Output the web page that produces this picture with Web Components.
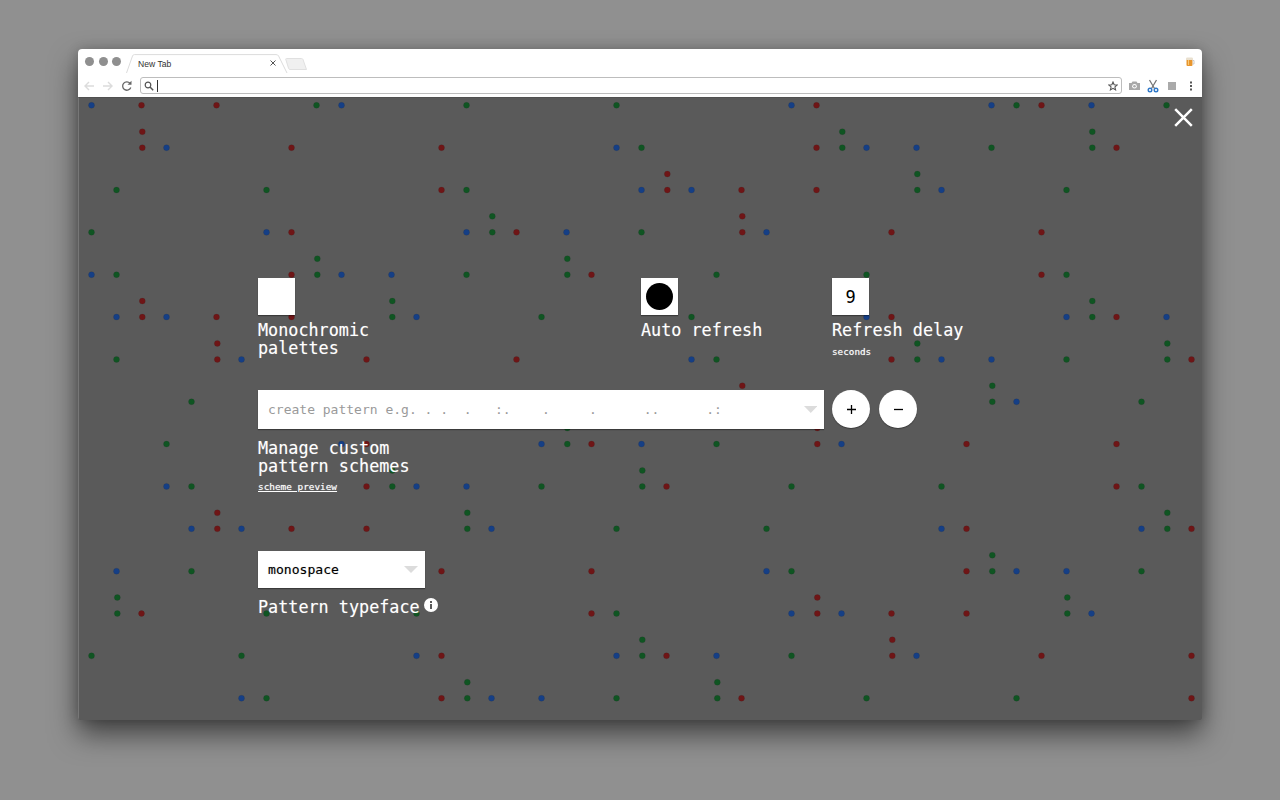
<!DOCTYPE html>
<html lang="en">
<head>
<meta charset="utf-8">
<title>New Tab</title>
<style>
  html, body { margin: 0; height: 100%; }
  body { background: #909090; font-family: "DejaVu Sans Mono", monospace; overflow: hidden; }
</style>
</head>
<body>
<browser-window>
  <settings-overlay>
    <dot-field slot="backdrop"></dot-field>
    <div slot="row1" style="display:contents">
      <setting-box style="width:383px" label="Monochromic&#10;palettes"></setting-box>
      <setting-box style="width:191px" label="Auto refresh" kind="circle"></setting-box>
      <setting-box label="Refresh delay" kind="number" value="9" note="seconds"></setting-box>
    </div>
    <pattern-row slot="row2"></pattern-row>
    <typeface-row slot="row3"></typeface-row>
  </settings-overlay>
</browser-window>

<script>
function mk(tag, css, html) {
  customElements.define(tag, class extends HTMLElement {
    constructor() {
      super();
      this.attachShadow({ mode: "open" }).innerHTML = "<style>" + css + "</style>" + html;
    }
  });
}

mk("browser-window",
  `:host{display:flex;flex-direction:column;width:1124px;height:671px;margin:49px 0 0 78px;
     border-radius:4px 4px 3px 3px;box-shadow:0 14px 28px rgba(0,0,0,.55),0 0 12px rgba(0,0,0,.18);overflow:hidden;background:#5a5a5a}
   main{flex:1;display:flex;min-height:0}`,
  `<tab-strip></tab-strip><tool-bar></tool-bar><main><slot></slot></main>`);

mk("tab-strip",
  `:host{display:flex;align-items:flex-end;height:25px;background:#fff;position:relative;flex:none}
   .lights{display:flex;gap:4.5px;padding:0 0 8px 7px;width:40px}
   .lights i{width:9px;height:9px;border-radius:50%;background:#8f8f8f;display:block}
   .tab{position:relative;width:164px;height:19px;margin:0 0 1px 1px;display:flex;align-items:center;
     font:8.6px "Liberation Sans",sans-serif;color:#333;padding-left:12px;box-sizing:border-box}
   .tab svg.shape{position:absolute;left:0;top:0}
   .tab span{position:relative}
   .tab b{position:absolute;left:143px;top:5px;width:8px;height:8px}
   .new{margin:0 0 0 -6px;padding-bottom:3px}
   .fav{position:absolute;right:7px;top:7px}`,
  `<div class="lights"><i></i><i></i><i></i></div>
   <div class="tab">
     <svg class="shape" width="164" height="19" viewBox="0 0 164 19"><path d="M.5 19 6.500 2Q7 .6 8.500 .6H150Q152 .6 152.600 2L161 19" fill="#fff" stroke="#dcdcdc"/></svg>
     <span>New Tab</span>
     <b><svg width="8" height="8" viewBox="0 0 8 8"><path d="M1.500 1.500 6.500 6.500M6.500 1.500 1.500 6.500" stroke="#555" stroke-width="1"/></svg></b>
   </div>
   <svg class="new" width="24" height="14" viewBox="0 0 24 14"><path d="M2.500 1.500H17.500Q18.500 1.500 19 2.500L22.500 12.500H6Q5 12.500 4.600 11.500L1.800 2.500Q1.500 1.500 2.500 1.500Z" fill="#f0f0f0" stroke="#e0e0e0"/></svg>
   <svg class="fav" width="10" height="11" viewBox="0 0 10 11"><rect x="1.500" y="3" width="6" height="7" rx="1" fill="#e8962e"/><rect x="3" y="4" width="1" height="5" fill="#f7c977"/><path d="M7.500 4.500H9V8H7.500" fill="none" stroke="#c9c9c9"/><rect x="1" y="1.500" width="7" height="2.500" rx="1.200" fill="#e9e0cf"/></svg>`);

mk("tool-bar",
  `:host{display:flex;align-items:center;height:23px;background:#fff;flex:none;box-sizing:border-box}
   svg{display:block;flex:none}
   .nav{display:flex;align-items:center;gap:3px;padding-left:3px;width:62px;box-sizing:border-box}
   .omni{width:982px;height:17px;box-sizing:border-box;border:1.5px solid #bdbdbd;border-radius:3px;display:flex;align-items:center;padding:0 3px 0 3px}
   .cursor{width:1px;height:12px;background:#333;margin-left:3px}
   .grow{flex:1}
   .acts{display:flex;align-items:center;gap:5px;padding-left:6px}`,
  `<div class="nav">
     <svg width="16" height="14" viewBox="0 0 16 14"><path d="M13 7H4M8 3 4 7l4 4" fill="none" stroke="#dcdcdc" stroke-width="1.400"/></svg>
     <svg width="16" height="14" viewBox="0 0 16 14"><path d="M3 7H12M8 3l4 4-4 4" fill="none" stroke="#dcdcdc" stroke-width="1.400"/></svg>
     <svg width="16" height="14" viewBox="0 0 16 14"><path d="M11.800 8.500A4.200 4.200 0 1 1 11 4.200" fill="none" stroke="#666" stroke-width="1.300"/><path d="M12.500 1.800V5.800H8.500Z" fill="#666"/></svg>
   </div>
   <div class="omni">
     <svg width="10" height="10" viewBox="0 0 10 10"><circle cx="4" cy="4" r="2.800" fill="none" stroke="#555" stroke-width="1.200"/><path d="M6 6 9.200 9.200" stroke="#555" stroke-width="1.500"/></svg>
     <span class="cursor"></span><span class="grow"></span>
     <svg width="10" height="10" viewBox="0 0 12 12"><path d="M6 1.200 7.400 4.500 11 4.800 8.300 7.100 9.100 10.700 6 8.800 2.900 10.700 3.700 7.100 1 4.800 4.600 4.500Z" fill="none" stroke="#555" stroke-width="1.300"/></svg>
   </div>
   <div class="acts">
     <svg width="13" height="13" viewBox="0 0 13 13"><path d="M1 4H3.500L4.500 2.500H8.500L9.500 4H12V11H1Z" fill="#a8a8a8"/><circle cx="6.500" cy="7.300" r="2.300" fill="#fff"/><circle cx="6.500" cy="7.300" r="1.300" fill="#a8a8a8"/></svg>
     <svg width="14" height="14" viewBox="0 0 14 14"><path d="M3.500 1 8.500 9.500M10.500 1 5.500 9.500" stroke="#777" stroke-width="1.300" fill="none"/><circle cx="4" cy="11" r="1.800" fill="none" stroke="#2f78c8" stroke-width="1.400"/><circle cx="10" cy="11" r="1.800" fill="none" stroke="#2f78c8" stroke-width="1.400"/></svg>
     <svg width="14" height="14" viewBox="0 0 14 14"><rect x="3" y="3" width="8" height="8" fill="#aaa"/></svg>
     <svg width="14" height="14" viewBox="0 0 14 14"><g fill="#555"><rect x="6" y="2.500" width="2" height="2"/><rect x="6" y="6" width="2" height="2"/><rect x="6" y="9.500" width="2" height="2"/></g></svg>
   </div>`);

mk("settings-overlay",
  `:host{display:block;flex:1;position:relative;background:#5a5a5a;border-top:1px solid #505050;box-sizing:border-box;
     border-left:1px solid #777}
   .panel{position:relative;display:flex;flex-direction:column;padding:180px 0 0 179px;color:#fff}
   .row1{display:flex;height:112px}
   .row2{height:161px}
   .close{position:absolute;right:9px;top:10px;width:19px;height:19px}
   svg{display:block}`,
  `<slot name="backdrop"></slot>
   <div class="panel">
     <div class="row1"><slot name="row1"></slot></div>
     <div class="row2"><slot name="row2"></slot></div>
     <div class="row3"><slot name="row3"></slot></div>
   </div>
   <div class="close"><svg width="19" height="19" viewBox="0 0 19 19"><path d="M1.200 1.200 17.800 17.800M17.800 1.200 1.200 17.800" stroke="#fff" stroke-width="2.500"/></svg></div>`);

customElements.define("dot-field", class extends HTMLElement {
  constructor() {
    super();
    const s = this.attachShadow({ mode: "open" });
    const C = { r: "#6f1516", g: "#0f5522", b: "#153f86" };
    // each row: [upper-dot columns, base-dot columns]; a column with an upper dot is nudged right (":" glyph)
    const R = [
      ["", "0b 2r 5r 9g 10b 15g 21g 28b 29r 36b 37g 38r 40b 43g"],
      ["2r 30g 40g", "2r 3b 8r 14r 21b 22g 29r 30g 31b 33b 36g 40g 41r"],
      ["23r 33g", "1g 7g 14r 15g 22b 23r 24b 26r 29r 33g 34b 39g"],
      ["16g 26r", "0g 7b 8r 15b 16g 17r 19b 22g 26r 27b 32r 38r"],
      ["9g 19g", "0b 1g 8r 9g 10b 12b 15g 19g 20r 25g 31g 38r 39g"],
      ["2r 12g 40g", "1b 2r 3b 5r 8r 12g 13b 18g 24g 31b 32r 39b 40g 41r 43b"],
      ["5r 33g 43g", "1g 5r 6b 11r 17r 24b 25g 32r 33g 34b 36b 39g 43g 44r"],
      ["26r 36g", "4g 36g 37b 42g"],
      ["19g 29r", "3g 10b 11r 18b 19g 20r 22b 25g 29r 30b 35r 41r"],
      ["12g 22g", "3b 4g 11r 12g 13b 15b 18g 22g 23r 28g 34g 41r 42g"],
      ["5r 15g 43g", "4b 5r 6b 8r 11r 15g 16b 21g 27g 34b 35r 42b 43g 44r"],
      ["36g", "1b 4g 14r 20r 27b 28g 35r 36g 37b 39b 42g"],
      ["1g 29r 39g", "1g 2r 7g 13g 20r 21g 28b 29r 30b 32r 35r 39g 40b"],
      ["22g 32r", "0g 6g 13b 14r 21b 22g 23r 25b 28g 32r 33b 38r 44r"],
      ["15g 25g", "6b 7g 14r 15g 16b 18b 21g 25g 26r 31g 37g 44r"],
    ];
    let c = "";
    R.forEach((row, i) => {
      const by = 7.3 + i * 42.35;
      const upper = row[0].split(" ").filter(Boolean);
      const nudged = new Set(upper.map(t => parseInt(t)));
      const put = (t, y) => {
        const k = parseInt(t), col = C[t.slice(-1)];
        const x = 12.5 + k * 25 + (nudged.has(k) ? .8 : 0);
        c += `<circle cx="${x}" cy="${y}" r="3" fill="${col}" stroke="rgba(40,40,40,.25)" stroke-width=".6"/>`;
      };
      upper.forEach(t => put(t, by - 16));
      row[1].split(" ").forEach(t => put(t, by));
    });
    s.innerHTML = `<style>:host{position:absolute;inset:0;display:block}svg{display:block;position:absolute;inset:0}</style>
      <svg width="1124" height="623" viewBox="0 0 1124 623">${c}</svg>`;
  }
});

customElements.define("setting-box", class extends HTMLElement {
  constructor() {
    super();
    const kind = this.getAttribute("kind");
    const label = this.getAttribute("label") || "";
    const note = this.getAttribute("note");
    const value = this.getAttribute("value") || "";
    const inner = kind === "circle" ? `<i></i>` : (kind === "number" ? `<span>${value}</span>` : "");
    this.attachShadow({ mode: "open" }).innerHTML = `<style>
      :host{display:block;flex:none;position:relative;font-family:"DejaVu Sans Mono",monospace}
      .box{width:37px;height:37px;background:#fff;box-shadow:0 1px 1px rgba(0,0,0,.35);display:flex;align-items:center;justify-content:center;color:#000;font-size:17px}
      .box i{display:block;width:27px;height:27px;border-radius:50%;background:#000}
      .lbl{margin:6px 0 0;font-size:16.8px;line-height:18px;white-space:pre;color:#fff;text-shadow:0 0 1px rgba(255,255,255,.35)}
      .note{margin-top:7px;font-size:9.300px;line-height:11px;color:#fff;text-shadow:0 0 1px rgba(255,255,255,.6)}
    </style><div class="box">${inner}</div><div class="lbl">${label}</div>${note ? `<div class="note">${note}</div>` : ""}`;
  }
});

mk("pattern-row",
  `:host{display:block;font-family:"DejaVu Sans Mono",monospace;color:#fff}
   .top{display:flex;align-items:center;gap:8px}
   .input{width:566px;height:38.500px;box-sizing:border-box;background:#fff;box-shadow:0 1px 1px rgba(0,0,0,.35);display:flex;align-items:center;padding:0 7px 0 10px}
   .ph{flex:1;font-size:13px;color:#9a9a9a;white-space:pre;line-height:36px;margin-top:2px}
   .btns{display:flex;gap:9px}
   .lbl{margin:10px 0 0;font-size:16.8px;line-height:18px;white-space:pre;text-shadow:0 0 1px rgba(255,255,255,.35)}
   a{display:inline-block;margin-top:6px;font-size:9.400px;line-height:11px;color:#fff;text-decoration:underline;text-shadow:0 0 1px rgba(255,255,255,.6)}
   svg{display:block}`,
  `<div class="top">
     <div class="input"><span class="ph">create pattern e.g. . .  .   :.    .     .      ..      .:</span>
       <svg width="13.500" height="7" viewBox="0 0 14 8" preserveAspectRatio="none"><path d="M0 0H14L7 8Z" fill="#dcdcdc"/></svg></div>
     <div class="btns"><round-button sign="plus"></round-button><round-button sign="minus"></round-button></div>
   </div>
   <div class="lbl">Manage custom
pattern schemes</div>
   <a href="#">scheme preview</a>`);

customElements.define("round-button", class extends HTMLElement {
  constructor() {
    super();
    const plus = this.getAttribute("sign") === "plus";
    this.attachShadow({ mode: "open" }).innerHTML = `<style>
      :host{display:flex;width:38px;height:38px;border-radius:50%;background:#fff;align-items:center;justify-content:center;box-shadow:0 1px 1px rgba(0,0,0,.35)}
      svg{display:block}</style>
      <svg width="9" height="9" viewBox="0 0 9 9"><path d="${plus ? "M0 4.500H9M4.500 0V9" : "M0 4.500H9"}" stroke="#000" stroke-width="1.300"/></svg>`;
  }
});

mk("typeface-row",
  `:host{display:block;font-family:"DejaVu Sans Mono",monospace;color:#fff}
   .sel{width:167px;height:37px;box-sizing:border-box;background:#fff;box-shadow:0 1px 1px rgba(0,0,0,.35);display:flex;align-items:center;padding:0 7px 0 10px;color:#000;font-size:13.100px}
   .sel span{flex:1;text-shadow:0 0 1px rgba(0,0,0,.35)}
   .lbl{margin-top:10px;display:flex;align-items:flex-start;font-size:16.8px;line-height:18px;white-space:pre;gap:4px;text-shadow:0 0 1px rgba(255,255,255,.35)}
   svg{display:block}`,
  `<div class="sel"><span>monospace</span><svg width="14" height="7" viewBox="0 0 14 8" preserveAspectRatio="none"><path d="M0 0H14L7 8Z" fill="#dcdcdc"/></svg></div>
   <div class="lbl">Pattern typeface<svg width="14" height="14" viewBox="0 0 14 14"><circle cx="7" cy="7" r="7" fill="#fff"/><rect x="6" y="6" width="2" height="5" fill="#5a5a5a"/><rect x="6" y="3" width="2" height="2" fill="#5a5a5a"/></svg></div>`);
</script>
</body>
</html>
